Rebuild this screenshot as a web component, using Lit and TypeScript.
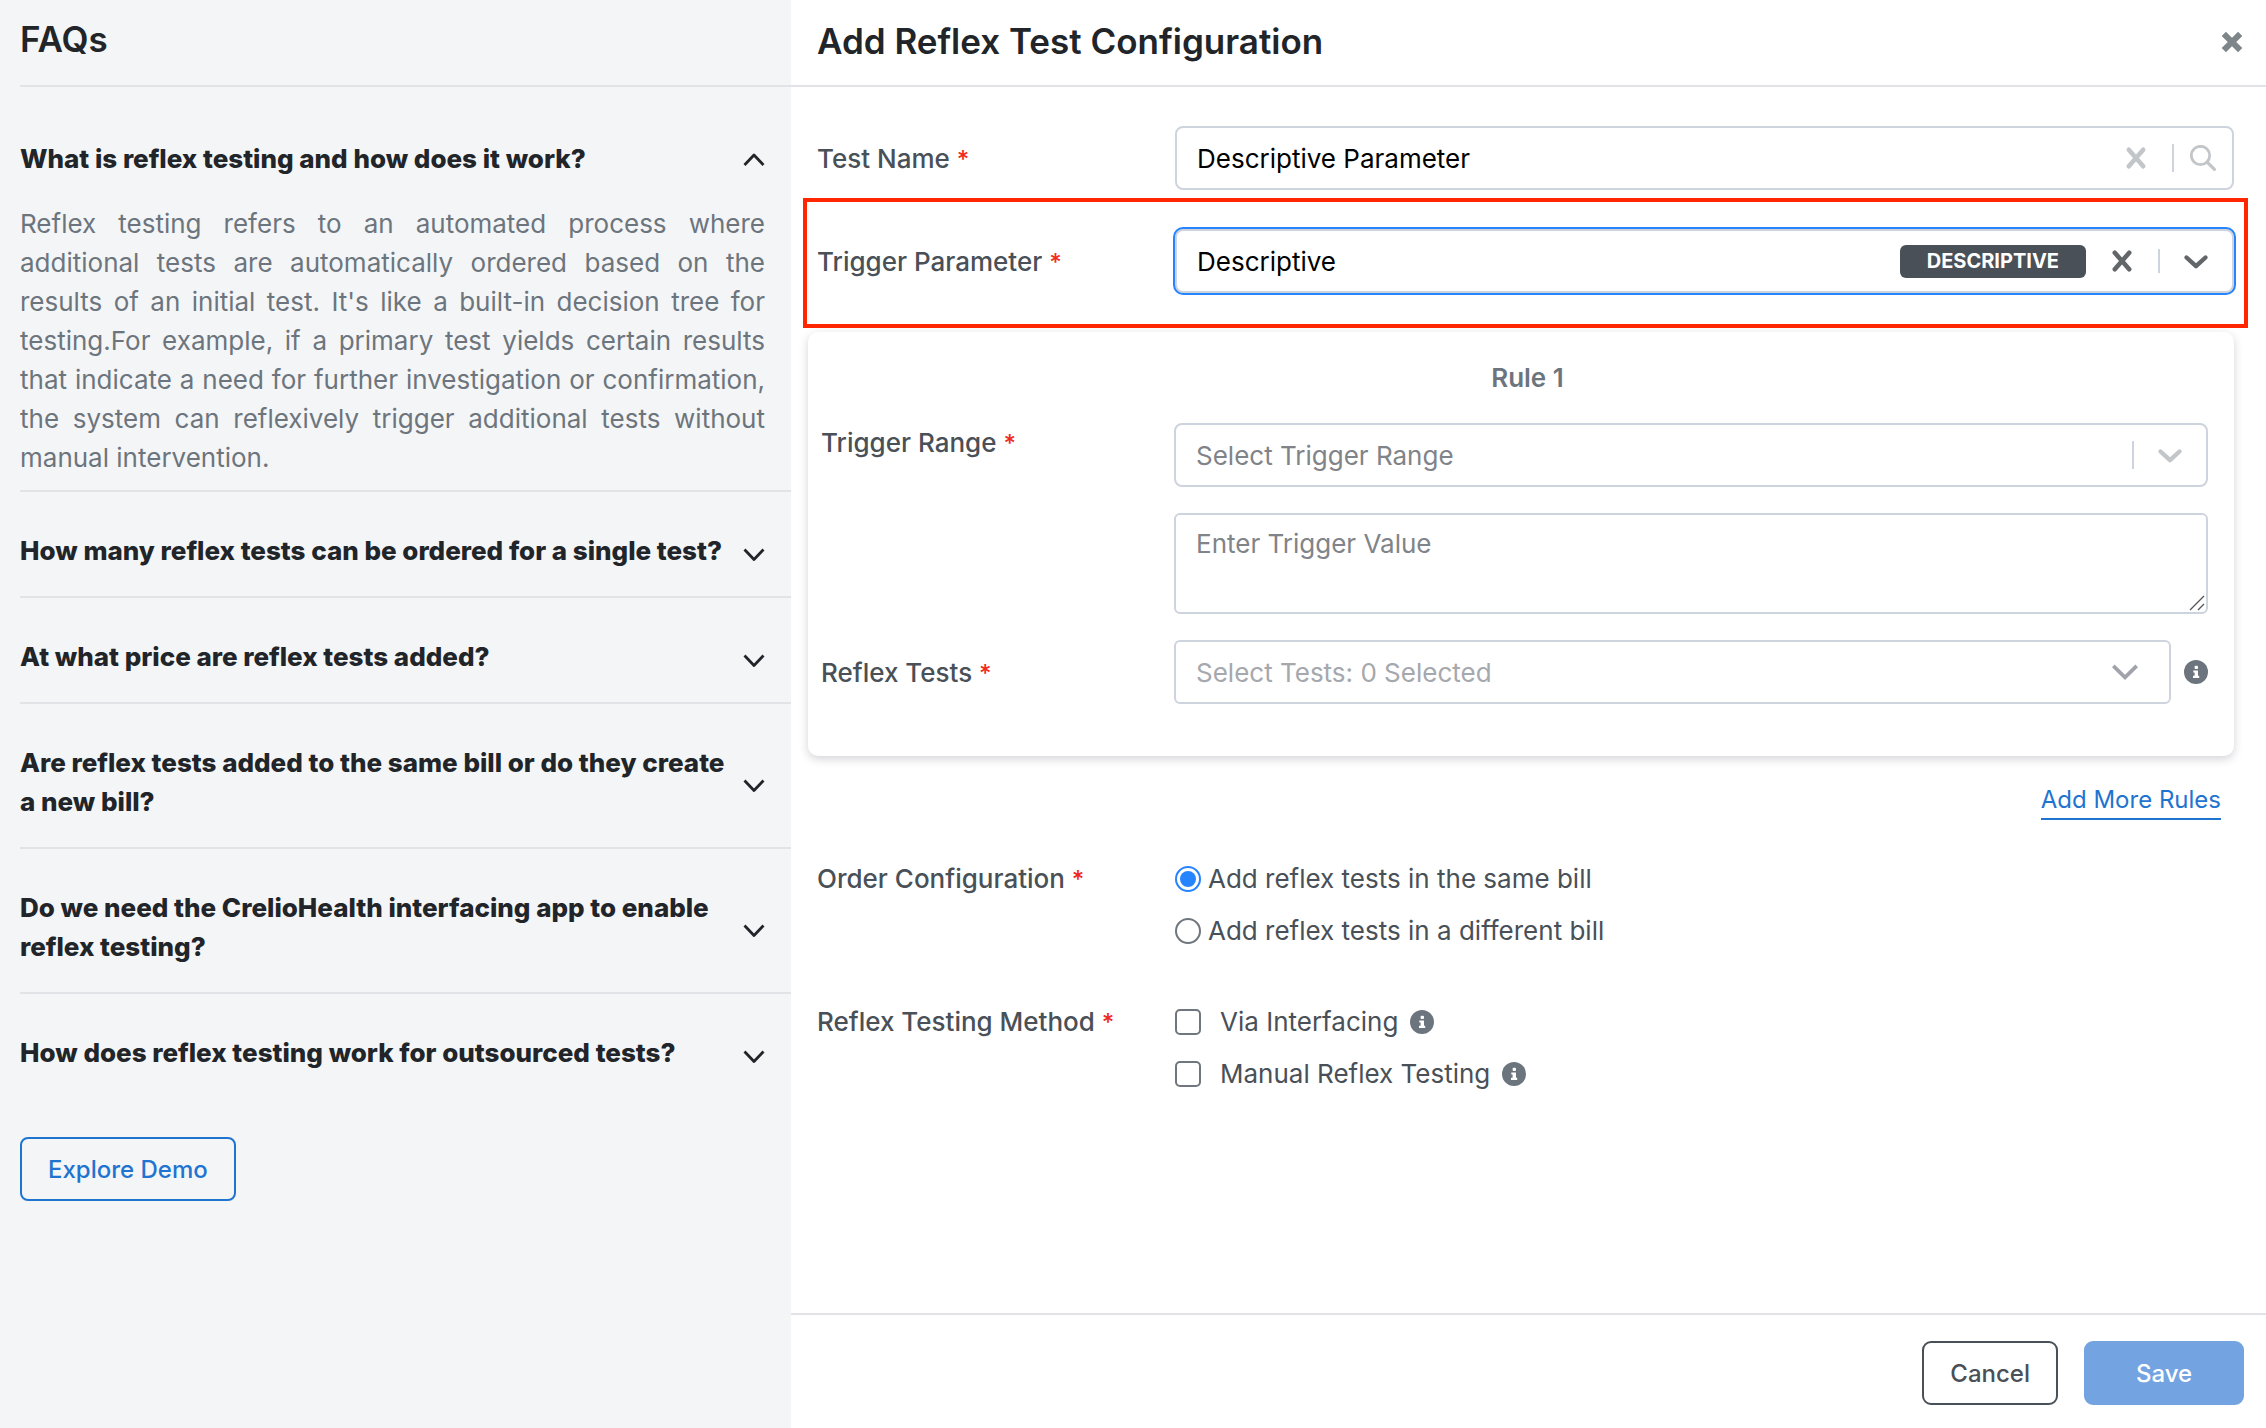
import { LitElement, html, css, svg, nothing } from "lit";
import { customElement, state } from "lit/decorators.js";

interface Faq {
  question: string;
  answer?: string;
}

const FAQS: Faq[] = [
  {
    question: "What is reflex testing and how does it work?",
    answer:
      "Reflex testing refers to an automated process where additional tests are automatically ordered based on the results of an initial test. It's like a built-in decision tree for testing.For example, if a primary test yields certain results that indicate a need for further investigation or confirmation, the system can reflexively trigger additional tests without manual intervention.",
  },
  { question: "How many reflex tests can be ordered for a single test?" },
  { question: "At what price are reflex tests added?" },
  { question: "Are reflex tests added to the same bill or do they create a new bill?" },
  { question: "Do we need the CrelioHealth interfacing app to enable reflex testing?" },
  { question: "How does reflex testing work for outsourced tests?" },
];

const stroke = (d: string, width: number, cap = "round") =>
  svg`<path d=${d} fill="none" stroke="currentColor" stroke-width=${width} stroke-linecap=${cap} stroke-linejoin="round" />`;

const faqChevron = (open: boolean) => html`
  <svg class="faq-icon" viewBox="0 0 22 26" aria-hidden="true">
    ${stroke(open ? "M1.500 19 L11 9 L20.500 19" : "M1.500 11.500 L11 21.500 L20.500 11.500", 2.8, "butt")}
  </svg>
`;

const clearIcon = html`
  <svg class="icon-26" viewBox="0 0 26 26" aria-hidden="true">${stroke("M5.800 4.800 L20.200 21.200 M20.200 4.800 L5.800 21.200", 4.6)}</svg>
`;

const chevronIcon = html`
  <svg class="icon-26" viewBox="0 0 26 26" aria-hidden="true">${stroke("M3.500 9.500 L13 18.200 L22.500 9.500", 4.4)}</svg>
`;

const sharpChevron = html`
  <svg class="icon-26" viewBox="0 0 26 26" aria-hidden="true">
    <path d="M2.600 5.500 L13 15.700 L23.400 5.500 L26 8.200 L13 21 L0 8.200 Z" fill="currentColor" />
  </svg>
`;

const searchIcon = html`
  <svg class="icon-26" viewBox="0 0 26 26" aria-hidden="true">
    <circle cx="10.500" cy="10.500" r="9.200" fill="none" stroke="currentColor" stroke-width="2.800" />
    ${stroke("M17.200 17.200 L24.400 24.400", 3.2)}
  </svg>
`;

const closeIcon = html`
  <svg class="icon-26" viewBox="0 0 26 26" aria-hidden="true">${stroke("M4.800 5.800 L21.200 22.200 M21.200 5.800 L4.800 22.200", 6, "butt")}</svg>
`;

const infoIcon = html`
  <svg class="info" viewBox="0 0 24 24" role="img" aria-label="Info">
    <circle cx="12" cy="12" r="12" fill="currentColor" />
    <rect x="10.600" y="5.800" width="3.400" height="3.200" rx="1" fill="#fff" />
    <path d="M9.300 10.400 H14 V15.800 H15.200 V18 H9 V15.800 H10.600 V12.600 H9.300 Z" fill="#fff" />
  </svg>
`;

const resizeGrip = html`
  <svg class="grip" viewBox="0 0 16 16" aria-hidden="true">
    <path d="M1 15 L15 1 M9 15 L15 9" fill="none" stroke="#55595e" stroke-width="1.400" />
  </svg>
`;

@customElement("app-root")
export class AppRoot extends LitElement {
  @state() private openFaq = 0;

  static styles = css`
    :host {
      display: block;
      font-family: Inter, "Liberation Sans", sans-serif;
      font-size: 26px;
      line-height: 39px;
      color: #212529;
      background: #fff;
    }
    *,
    *::before {
      box-sizing: border-box;
    }
    h1,
    h2,
    h3,
    p,
    fieldset {
      margin: 0;
      padding: 0;
      border: 0;
      min-width: 0;
    }
    h3 {
      font-size: 26px;
    }
    button,
    input,
    select,
    textarea {
      font: inherit;
      color: inherit;
      margin: 0;
    }
    button {
      border: 0;
      padding: 0;
      background: none;
      cursor: pointer;
    }
    svg {
      display: block;
      flex: none;
    }
    .page {
      display: grid;
      grid-template-columns: minmax(0, 791fr) minmax(0, 1475fr);
      min-height: 100vh;
    }

    .sidebar {
      background: #f4f5f7;
      padding-left: 20px;
    }
    .title {
      font-size: 35px;
      line-height: 54px;
      font-weight: 600;
    }
    .faq-header {
      padding: 12px 0 19px;
      border-bottom: 2px solid #e1e3e6;
      margin-bottom: 13px;
    }
    .faq {
      border-bottom: 2px solid #e1e3e6;
    }
    .faq:last-of-type {
      border-bottom: 0;
    }
    .question {
      display: flex;
      align-items: center;
      justify-content: space-between;
      gap: 6px;
      width: 100%;
      padding: 39px 26px 26px 0;
      text-align: left;
      font-weight: 800;
    }
    .faq-icon {
      width: 22px;
      height: 26px;
    }
    .answer {
      padding: 0 26px 13px 0;
      color: #6c757d;
      text-align: justify;
    }
    .demo {
      margin-top: 39px;
      height: 64px;
      padding: 0 26px;
      border: 2px solid #1f74d0;
      border-radius: 8px;
      color: #1f74d0;
      font-size: 24px;
      font-weight: 500;
    }

    .panel {
      display: flex;
      flex-direction: column;
    }
    .panel-header {
      display: flex;
      align-items: center;
      justify-content: space-between;
      padding: 14px 21px 17px 26px;
      border-bottom: 2px solid #e1e3e8;
    }
    .close {
      color: #7f8689;
    }
    .icon-26 {
      width: 26px;
      height: 26px;
    }
    .form {
      flex: 1;
      display: flex;
      flex-direction: column;
      padding: 39px 32px 39px 26px;
      color: #495057;
    }
    .row {
      display: grid;
      grid-template-columns: minmax(0, 358fr) minmax(0, 1059fr);
      align-items: center;
      position: relative;
      margin-bottom: 39px;
    }
    .name {
      font-weight: 500;
    }
    .req {
      color: #f02a1d;
      font-size: 24px;
      line-height: 1;
    }
    .control {
      display: flex;
      align-items: center;
      min-width: 0;
      height: 64px;
      border: 2px solid #ced4dd;
      border-radius: 8px;
      background: #fff;
      color: #c3c6c9;
    }
    .control.focused {
      box-shadow: 0 0 0 2px #2684ff;
      color: #636669;
    }
    .field {
      flex: 1;
      min-width: 0;
      height: 60px;
      padding: 0 20px;
      border: 0;
      outline: 0;
      background: none;
      appearance: none;
      color: #000;
    }
    .field.empty {
      color: #808489;
      opacity: 1;
    }
    .field.faint {
      color: #a5a8ad;
    }
    .divider {
      width: 2px;
      height: 28px;
      background: #ced4dd;
    }
    .focused .divider {
      height: 24px;
    }
    .clear {
      margin-right: 23px;
    }
    .end {
      margin: 0 23px;
    }
    .end.search {
      margin: 0 16px;
    }
    .end.wide {
      margin-right: 31px;
      color: #a0a3a9;
    }
    .badge {
      margin-right: 23px;
      padding: 0 27px;
      border-radius: 6px;
      background: #495057;
      color: #fff;
      font-size: 20px;
      line-height: 33px;
      font-weight: 700;
    }
    .highlight {
      position: absolute;
      inset: -31px -14px -35px -14px;
      border: 4px solid #ff2600;
      pointer-events: none;
      z-index: 1;
    }

    .rule {
      margin-left: -9px;
      padding: 26px 0 52px 13px;
      border-radius: 10px;
      box-shadow: 0 3px 10px rgba(33, 37, 60, 0.2);
      display: flex;
      flex-direction: column;
      gap: 26px;
    }
    .rule-title {
      font-size: 26px;
      line-height: 39px;
      font-weight: 600;
      text-align: center;
      color: #6c757d;
    }
    .rule-row {
      display: grid;
      grid-template-columns: minmax(0, 353fr) minmax(0, 1034fr);
      align-items: center;
      padding-right: 26px;
    }
    .rule-row.top {
      align-items: start;
    }
    .stack {
      display: flex;
      flex-direction: column;
      gap: 26px;
    }
    .area-wrap {
      position: relative;
    }
    .area {
      display: block;
      width: 100%;
      height: 101px;
      padding: 9px 20px;
      border: 2px solid #ced4dd;
      border-radius: 6px;
      background: #fff;
      resize: none;
    }
    .area::placeholder {
      color: #808489;
      opacity: 1;
    }
    .grip {
      position: absolute;
      right: 3px;
      bottom: 3px;
      width: 16px;
      height: 16px;
    }
    .with-info {
      display: flex;
      align-items: center;
      gap: 13px;
    }
    .with-info .control {
      flex: 1;
      border-radius: 6px;
    }
    .info {
      width: 24px;
      height: 24px;
      color: #6c757d;
    }
    .add {
      align-self: flex-end;
      margin: 26px 13px 39px 0;
      border-bottom: 2px solid #1f74d0;
      color: #1f74d0;
      font-size: 24px;
      line-height: 36px;
      text-decoration: none;
    }
    .group {
      display: grid;
      grid-template-columns: minmax(0, 358fr) minmax(0, 1059fr);
      align-items: start;
      margin-bottom: 52px;
    }
    .options {
      display: flex;
      flex-direction: column;
      gap: 13px;
    }
    .option {
      display: flex;
      align-items: center;
      gap: 7px;
    }
    .option.check {
      gap: 12px;
    }
    .option.check .box {
      margin-right: 7px;
    }
    .box {
      appearance: none;
      flex: none;
      width: 26px;
      height: 26px;
      border: 2px solid #6f767d;
      border-radius: 5px;
      background: #fff;
    }
    .box.round {
      border-radius: 50%;
      display: grid;
      place-items: center;
    }
    .box.round:checked {
      border-color: #2684ff;
    }
    .box.round:checked::before {
      content: "";
      width: 16px;
      height: 16px;
      border-radius: 50%;
      background: #2684ff;
    }
    .footer {
      display: flex;
      justify-content: flex-end;
      gap: 26px;
      padding: 26px 22px 23px;
      border-top: 2px solid #e1e3e8;
    }
    .btn {
      height: 64px;
      padding: 0 26px;
      border: 2px solid #495057;
      border-radius: 9px;
      color: #495057;
      font-size: 24px;
      font-weight: 500;
    }
    .btn.primary {
      min-width: 160px;
      border-color: #74a3e1;
      background: #74a3e1;
      color: #fff;
    }
  `;

  private label(text: string, id: string) {
    return html`<label class="name" for=${id}>${text} <span class="req">*</span></label>`;
  }

  private toggle(index: number) {
    this.openFaq = this.openFaq === index ? -1 : index;
  }

  private renderFaq(faq: Faq, index: number) {
    const open = this.openFaq === index;
    return html`
      <section class="faq">
        <h3>
          <button class="question" type="button" aria-expanded=${open} @click=${() => this.toggle(index)}>
            <span>${faq.question}</span>${faqChevron(open)}
          </button>
        </h3>
        ${open && faq.answer ? html`<p class="answer">${faq.answer}</p>` : nothing}
      </section>
    `;
  }

  private renderRule() {
    return html`
      <section class="rule">
        <h2 class="rule-title">Rule 1</h2>
        <div class="rule-row top">
          ${this.label("Trigger Range", "range")}
          <div class="stack">
            <div class="control">
              <select class="field empty" id="range">
                <option>Select Trigger Range</option>
              </select>
              <span class="divider"></span>
              <span class="end">${chevronIcon}</span>
            </div>
            <div class="area-wrap">
              <textarea class="area" aria-label="Trigger value" placeholder="Enter Trigger Value"></textarea>
              ${resizeGrip}
            </div>
          </div>
        </div>
        <div class="rule-row">
          ${this.label("Reflex Tests", "tests")}
          <div class="with-info">
            <div class="control">
              <select class="field faint" id="tests">
                <option>Select Tests: 0 Selected</option>
              </select>
              <span class="end wide">${sharpChevron}</span>
            </div>
            ${infoIcon}
          </div>
        </div>
      </section>
    `;
  }

  render() {
    return html`
      <div class="page">
        <aside class="sidebar">
          <header class="faq-header"><h2 class="title">FAQs</h2></header>
          ${FAQS.map((faq, i) => this.renderFaq(faq, i))}
          <button class="demo" type="button">Explore Demo</button>
        </aside>

        <main class="panel">
          <header class="panel-header">
            <h1 class="title">Add Reflex Test Configuration</h1>
            <button class="close" type="button" aria-label="Close">${closeIcon}</button>
          </header>

          <form class="form">
            <div class="row">
              ${this.label("Test Name", "test-name")}
              <div class="control">
                <input class="field" id="test-name" type="text" value="Descriptive Parameter" />
                <button class="clear" type="button" aria-label="Clear test name">${clearIcon}</button>
                <span class="divider"></span>
                <span class="end search">${searchIcon}</span>
              </div>
            </div>

            <div class="row">
              ${this.label("Trigger Parameter", "parameter")}
              <div class="control focused">
                <select class="field" id="parameter">
                  <option>Descriptive</option>
                </select>
                <span class="badge">DESCRIPTIVE</span>
                <button class="clear" type="button" aria-label="Clear trigger parameter">${clearIcon}</button>
                <span class="divider"></span>
                <span class="end">${chevronIcon}</span>
              </div>
              <div class="highlight"></div>
            </div>

            ${this.renderRule()}
            <a class="add" href="#rules">Add More Rules</a>

            <fieldset class="group" aria-labelledby="order">
              <span class="name" id="order">Order Configuration <span class="req">*</span></span>
              <div class="options">
                <label class="option"><input class="box round" type="radio" name="bill" checked />Add reflex tests in the same bill</label>
                <label class="option"><input class="box round" type="radio" name="bill" />Add reflex tests in a different bill</label>
              </div>
            </fieldset>

            <fieldset class="group" aria-labelledby="method">
              <span class="name" id="method">Reflex Testing Method <span class="req">*</span></span>
              <div class="options">
                <label class="option check"><input class="box" type="checkbox" />Via Interfacing ${infoIcon}</label>
                <label class="option check"><input class="box" type="checkbox" />Manual Reflex Testing ${infoIcon}</label>
              </div>
            </fieldset>
          </form>

          <footer class="footer">
            <button class="btn" type="button">Cancel</button>
            <button class="btn primary" type="button">Save</button>
          </footer>
        </main>
      </div>
    `;
  }
}
